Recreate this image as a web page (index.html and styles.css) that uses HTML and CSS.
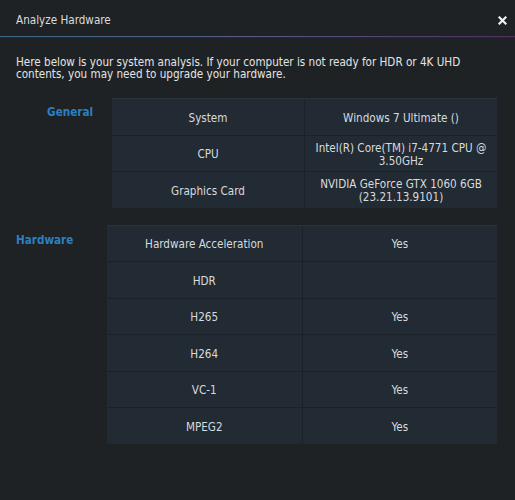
FILE: index.html
```html
<!DOCTYPE html>
<html>
<head>
<meta charset="utf-8">
<link rel="stylesheet" href="styles.css">
</head>
<body>
<div class="dialog">
  <div class="titlebar">
    <span class="title">Analyze Hardware</span>
    <svg class="close" width="9" height="9" viewBox="0 0 9 9"><path d="M1.5 1.5 L7.5 7.5 M7.5 1.5 L1.5 7.5" stroke="#f2f2f2" stroke-width="2.2" stroke-linecap="square"/></svg>
  </div>
  <div class="sep"></div>
  <p class="intro">Here below is your system analysis. If your computer is not ready for HDR or 4K UHD contents, you may need to upgrade your hardware.</p>

  <div class="section section-general">
    <div class="label">General</div>
    <div class="table">
      <div class="cell">System</div><div class="cell">Windows 7 Ultimate ()</div>
      <div class="cell">CPU</div><div class="cell">Intel(R) Core(TM) i7-4771 CPU @<br>3.50GHz</div>
      <div class="cell">Graphics Card</div><div class="cell">NVIDIA GeForce GTX 1060 6GB<br>(23.21.13.9101)</div>
    </div>
  </div>

  <div class="section section-hw">
    <div class="label">Hardware</div>
    <div class="table">
      <div class="cell">Hardware Acceleration</div><div class="cell">Yes</div>
      <div class="cell">HDR</div><div class="cell"></div>
      <div class="cell">H265</div><div class="cell">Yes</div>
      <div class="cell">H264</div><div class="cell">Yes</div>
      <div class="cell">VC-1</div><div class="cell">Yes</div>
      <div class="cell">MPEG2</div><div class="cell">Yes</div>
    </div>
  </div>
</div>
</body>
</html>
```
FILE: styles.css
```css
html, body {
  margin: 0;
  padding: 0;
  background: #1e2225;
}
body {
  width: 515px;
  height: 500px;
  overflow: hidden;
  font-family: "DejaVu Sans Condensed", "DejaVu Sans", sans-serif;
  font-size: 11.6px;
  color: #dcdfe2;
}
.dialog {
  display: flex;
  flex-direction: column;
}
.titlebar {
  height: 36px;
  display: flex;
  align-items: center;
  justify-content: space-between;
  padding: 0 8px 0 16px;
  box-sizing: border-box;
}
.title {
  color: #dadcde;
  margin-top: 4px;
}
.close {
  display: block;
  margin-top: 4px;
}
.sep {
  height: 1px;
  background: linear-gradient(90deg, #3b6884 0%, #555c88 45%, #4d3060 100%);
  border-bottom: 1px solid #1b2a36;
}
.intro {
  margin: 18px 0 0 16px;
  line-height: 12px;
  width: 480px;
  color: #e2e4e6;
}
.section {
  display: flex;
  align-items: flex-start;
  padding-left: 16px;
}
.section-general {
  margin-top: 18px;
}
.section-general .label {
  width: 77px;
  text-align: right;
  margin-right: 19px;
}
.section-hw {
  margin-top: 17px;
}
.section-hw .label {
  width: 91px;
  margin-top: 8px;
}
.label {
  color: #2d7fc1;
  font-weight: bold;
  margin-top: 7px;
  flex-shrink: 0;
}
.table {
  flex: 1;
  margin-right: 18px;
  display: grid;
  grid-template-columns: 1fr 1fr;
  grid-auto-rows: 35.5px;
  gap: 1px;
  background: #1b2129;
  border-top: 1px solid #2a323c;
}
.cell {
  background: #222a33;
  display: flex;
  align-items: center;
  justify-content: center;
  text-align: center;
  line-height: 13px;
  padding-top: 3px;
  color: #d8dbde;
}
```
